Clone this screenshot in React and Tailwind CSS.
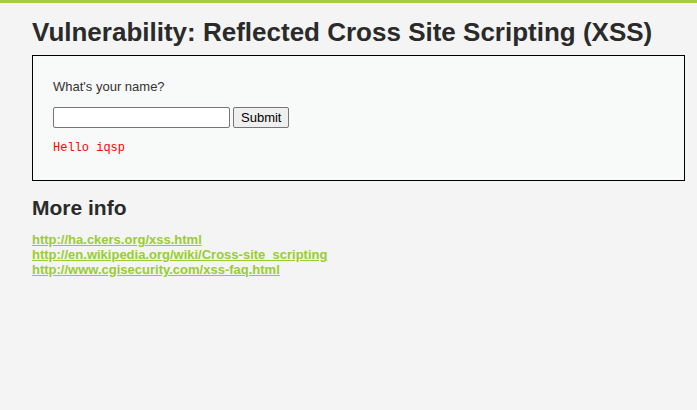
export default function App() {
  return (
    <div className="min-h-[410px] bg-[#f4f4f4] text-[#2a2a2a]">
      <div className="h-[3px] bg-[#a6cd3a]" />
      <div className="pl-[32px] pr-[12px] font-['Liberation_Sans',Arial,sans-serif]">
        <h1 className="text-[26px] font-bold leading-[30px] mt-[14px] mb-[8px]">
          Vulnerability: Reflected Cross Site Scripting (XSS)
        </h1>
        <div className="border border-black bg-[#f8f9f9] h-[126px] pl-[20px] pt-[23px]">
          <div className="text-[13px] leading-[15px] text-[#333]">What's your name?</div>
          <div className="flex items-center gap-[3px] mt-[13px]">
            <input className="w-[177px] h-[21px] border border-[#767676] rounded-[2px] bg-white" />
            <button className="h-[21px] px-[7px] text-[13px] leading-[15px] border border-[#767676] rounded-[2px] bg-[#efefef] text-black">
              Submit
            </button>
          </div>
          <pre className="mt-[13px] text-[12px] leading-[14px] text-[#ff0000] font-['Liberation_Mono',monospace]">Hello iqsp</pre>
        </div>
        <h2 className="text-[21px] font-bold leading-[24px] mt-[15px]">More info</h2>
        <ul className="mt-[12px] text-[13px] font-bold leading-[15px]">
          <li><a className="text-[#99cc33] underline" href="#">http://ha.ckers.org/xss.html</a></li>
          <li><a className="text-[#99cc33] underline" href="#">http://en.wikipedia.org/wiki/Cross-site_scripting</a></li>
          <li><a className="text-[#99cc33] underline" href="#">http://www.cgisecurity.com/xss-faq.html</a></li>
        </ul>
      </div>
    </div>
  );
}
